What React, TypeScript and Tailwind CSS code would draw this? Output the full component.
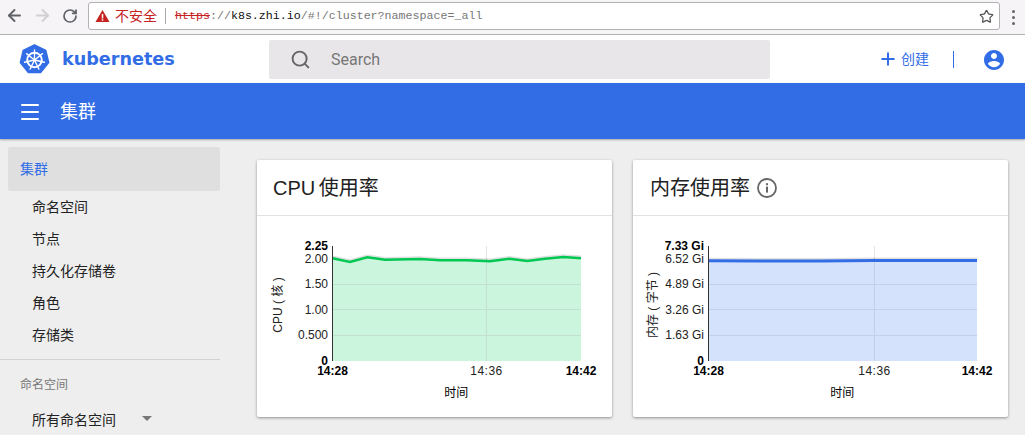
import { ArrowLeft, ArrowRight, RotateCw, Star, Search, Plus, Menu } from 'lucide-react';

const CJK = "font-['Liberation_Sans','Noto_Sans_CJK_SC',sans-serif]";

const NAV_ITEMS = ['命名空间', '节点', '持久化存储卷', '角色', '存储类'];

const CPU_LINE = '332.5,258.3 350,262 367.3,257.3 385,259.7 420,259 440,260.3 466.7,260.3 490,261.3 509.3,258.7 527.3,261 545,258.7 563.3,257 581,258.3';
const MEM_LINE = '708.5,260.8 760,261 820,261 874,260.6 930,260.4 977,260.4';

interface Tick {
  label: string;
  y: number;
  bold?: boolean;
}

interface ChartProps {
  box: string;
  left: number;
  right: number;
  mid: number;
  line: string;
  stroke: string;
  strokeWidth: number;
  fill: string;
  grid: string;
  ticks: Tick[];
  yLabel: string;
  yLabelX: number;
  height: number;
  width: number;
}

function Chart({ box, left, right, mid, line, stroke, strokeWidth, fill, grid, ticks, yLabel, yLabelX, width, height }: ChartProps) {
  const fontFamily = "'Liberation Sans','Noto Sans CJK SC',sans-serif";
  return (
    <svg viewBox={box} width={width} height={height} className="block" fontFamily={fontFamily} fontSize={12} fill="#222">
      <polygon points={`${left},361 ${line} ${right},361`} fill={fill} />
      <line x1={mid} x2={mid} y1={246} y2={258} stroke="#e4e4e4" />
      <line x1={mid} x2={mid} y1={258} y2={361} stroke={grid} />
      {[284.5, 309.5, 335.5].map(y => (
        <line key={y} x1={left} x2={right} y1={y} y2={y} stroke={grid} />
      ))}
      {/* soft edge just above the series line */}
      <polyline points={line} fill="none" stroke="#000" strokeOpacity={0.12} strokeWidth={strokeWidth} transform="translate(0 -1.5)" />
      <polyline points={line} fill="none" stroke={stroke} strokeWidth={strokeWidth} />
      <line x1={left} x2={left} y1={246} y2={361} stroke="#333" />
      {ticks.map(t => (
        <text key={t.label} x={left - 4.5} y={t.y} textAnchor="end" fontWeight={t.bold ? 700 : 400} fill={t.bold ? '#000' : '#222'}>{t.label}</text>
      ))}
      <text x={left} y={375} textAnchor="middle" fontWeight={700} fill="#000">14:28</text>
      <text x={mid} y={375} textAnchor="middle" letterSpacing={0.5}>14:36</text>
      <text x={right} y={375} textAnchor="middle" fontWeight={700} fill="#000">14:42</text>
      <text x={(left + right) / 2 - 0.5} y={397} textAnchor="middle" fill="#000">时间</text>
      <text x={yLabelX} y={305} textAnchor="middle" transform={`rotate(-90 ${yLabelX} 305)`} dominantBaseline="central">{yLabel}</text>
    </svg>
  );
}

function HelmLogo() {
  const spokes = [0, 51.4, 102.8, 154.3, 205.7, 257.1, 308.6];
  return (
    <svg viewBox="0 0 32 32" className="w-[31px] h-[31px] shrink-0">
      <path d="M16 1 L27.6 6.6 L30.6 19.2 L22.5 29.3 L9.5 29.3 L1.4 19.2 L4.4 6.6 Z" fill="#326de6" stroke="#326de6" strokeWidth="1.6" strokeLinejoin="round" />
      <circle cx="16" cy="16.5" r="7.5" fill="none" stroke="#fff" strokeWidth="2" />
      <circle cx="16" cy="16.5" r="1.6" fill="#fff" />
      {spokes.map(a => (
        <line key={a} x1="16" y1="16.5" x2="16" y2="6" stroke="#fff" strokeWidth="1.4" strokeLinecap="round" transform={`rotate(${a} 16 16.5)`} />
      ))}
    </svg>
  );
}

export default function App() {
  return (
    <div className={`w-[1025px] h-[435px] overflow-hidden flex flex-col bg-[#eeeeee] ${CJK}`}>
      {/* browser bar */}
      <div className="h-[35px] shrink-0 flex items-start bg-[#f6f4f6] border-b border-[#b4b1b4]">
        <div className="w-[88px] h-[31px] flex items-center shrink-0 pl-[5px] gap-[9px]">
          <ArrowLeft size={19} color="#5f6368" strokeWidth={2.4} />
          <ArrowRight size={19} color="#d0d0d0" strokeWidth={2.4} />
          <RotateCw size={16} color="#5f6368" strokeWidth={2.6} className="ml-[1px]" />
        </div>
        <div className="mt-[2px] w-[912px] h-[28px] bg-white border border-[#b4b1b4] rounded-[3px] flex items-center pl-[6px] pr-[5px]">
          <svg viewBox="0 0 16 14" className="w-[15px] h-[14px] shrink-0">
            <path d="M8 0.5 L15.5 13.5 L0.5 13.5 Z" fill="#c5221f" />
            <rect x="7.2" y="4.8" width="1.6" height="4.8" fill="#fff" />
            <rect x="7.2" y="10.4" width="1.6" height="1.6" fill="#fff" />
          </svg>
          <span className="ml-[5px] text-[14px] text-[#c5221f] leading-none">不安全</span>
          <span className="ml-[8px] w-px h-[16px] bg-[#a8a8a8]" />
          <span className="ml-[9px] font-['Liberation_Mono',monospace] text-[11.65px] leading-none text-[#777] whitespace-nowrap">
            <span className="text-[#c5221f] line-through">https</span>://<span className="text-[#111]">k8s.zhi.io</span>/#!/cluster?namespace=_all
          </span>
          <Star size={15} color="#555" strokeWidth={2} className="ml-auto" />
        </div>
        <div className="flex-1 flex flex-col items-center gap-[3px] pt-[10px] pl-[1px]">
          <span className="w-[3px] h-[3px] rounded-full bg-[#666]" />
          <span className="w-[3px] h-[3px] rounded-full bg-[#666]" />
          <span className="w-[3px] h-[3px] rounded-full bg-[#666]" />
        </div>
      </div>

      {/* toolbar */}
      <div className="h-[48px] shrink-0 bg-white flex items-center">
        <div className="w-[269px] shrink-0 flex items-center pl-[19px] gap-[12px]">
          <HelmLogo />
          <span className="mt-[2px] font-['DejaVu_Sans',sans-serif] font-bold text-[#326de6] text-[17.6px] leading-none">kubernetes</span>
        </div>
        <div className="w-[501px] h-[39px] bg-[#e8e6e8] rounded-[2px] flex items-center pl-[21px] shrink-0">
          <Search size={21} color="#666" strokeWidth={2.2} />
          <span className="ml-[20px] mt-[2px] font-['Roboto',sans-serif] text-[16px] text-[#777]">Search</span>
        </div>
        <div className="flex items-center pl-[108px]">
          <Plus size={20} color="#326de6" strokeWidth={2.4} />
          <span className="ml-[3px] text-[14px] text-[#326de6]">创建</span>
          <span className="ml-[24px] w-px h-[17px] bg-[#326de6]" />
          <svg viewBox="0 0 24 24" className="ml-[28px] mt-[2px] w-[24px] h-[24px]" fill="#326de6">
            <path d="M12 2C6.48 2 2 6.48 2 12s4.48 10 10 10 10-4.48 10-10S17.52 2 12 2zm0 3c1.66 0 3 1.34 3 3s-1.34 3-3 3-3-1.34-3-3 1.34-3 3-3zm0 14.2c-2.5 0-4.71-1.28-6-3.22.03-1.99 4-3.08 6-3.08 1.99 0 5.97 1.09 6 3.08-1.29 1.94-3.5 3.22-6 3.22z" />
          </svg>
        </div>
      </div>

      {/* title bar */}
      <div className="h-[56px] shrink-0 bg-[#326de6] flex items-center pl-[18px] pt-[2px] text-white shadow-[0_1px_2px_rgba(0,0,0,0.3)] z-10">
        <Menu size={24} strokeWidth={2} />
        <span className="ml-[18px] text-[18px]">集群</span>
      </div>

      <div className="flex flex-1 min-h-0">
        {/* sidebar */}
        <div className="w-[220px] shrink-0 pt-[8px]">
          <div className="ml-[8px] h-[44px] bg-[#dfdfdf] rounded-[2px] flex items-center pl-[12px] text-[14px] text-[#326de6]">集群</div>
          {NAV_ITEMS.map(item => (
            <div key={item} className="h-[32px] flex items-center pl-[32px] text-[14px] text-[#222]">{item}</div>
          ))}
          <div className="mt-[8px] border-t border-[#d2d2d2]" />
          <div className="pl-[20px] pt-[17px] text-[12px] leading-[17px] text-[#777]">命名空间</div>
          <div className="pl-[32px] pt-[16px] flex items-center text-[14px] text-[#222]">
            <span>所有命名空间</span>
            <span className="ml-[26px] mb-[4px] border-x-[5px] border-x-transparent border-t-[5px] border-t-[#777]" />
          </div>
        </div>

        {/* cards */}
        <div className="flex items-start gap-[21px] pl-[37px] pt-[21px]">
          <div className="w-[355px] h-[257px] bg-white rounded-[2px] shadow-[0_1px_3px_rgba(0,0,0,0.4)]">
            <div className="h-[56px] border-b border-[#e2e2e2] flex items-center pl-[16px] text-[20px] text-[#222] [word-spacing:-2px]">CPU 使用率</div>
            <Chart
              box="257 216 355 201"
              width={355}
              height={201}
              left={332.5}
              right={581}
              mid={486.5}
              line={CPU_LINE}
              stroke="#00c853"
              strokeWidth={2.6}
              fill="#ccf5dd"
              grid="#c2e0cf"
              yLabel="CPU ( 核 )"
              yLabelX={278}
              ticks={[
                { label: '2.25', y: 250, bold: true },
                { label: '2.00', y: 263 },
                { label: '1.50', y: 288 },
                { label: '1.00', y: 314 },
                { label: '0.500', y: 339 },
                { label: '0', y: 365, bold: true },
              ]}
            />
          </div>
          <div className="w-[375px] h-[257px] bg-white rounded-[2px] shadow-[0_1px_3px_rgba(0,0,0,0.4)]">
            <div className="h-[56px] border-b border-[#e2e2e2] flex items-center pl-[17px] text-[20px] text-[#222]">
              内存使用率
              <svg viewBox="0 0 20 20" className="ml-[7px] w-[20px] h-[20px]">
                <circle cx="10" cy="10" r="9" fill="none" stroke="#666" strokeWidth="1.8" />
                <rect x="9" y="8.6" width="2" height="6" fill="#666" />
                <rect x="9" y="5.2" width="2" height="2" fill="#666" />
              </svg>
            </div>
            <Chart
              box="633 216 375 201"
              width={375}
              height={201}
              left={708.5}
              right={977}
              mid={874.5}
              line={MEM_LINE}
              stroke="#326de6"
              strokeWidth={3}
              fill="#d5e2fb"
              grid="#c4cfe8"
              yLabel="内存 ( 字节 )"
              yLabelX={653}
              ticks={[
                { label: '7.33 Gi', y: 250, bold: true },
                { label: '6.52 Gi', y: 263 },
                { label: '4.89 Gi', y: 288 },
                { label: '3.26 Gi', y: 314 },
                { label: '1.63 Gi', y: 339 },
                { label: '0', y: 365, bold: true },
              ]}
            />
          </div>
        </div>
      </div>
    </div>
  );
}
